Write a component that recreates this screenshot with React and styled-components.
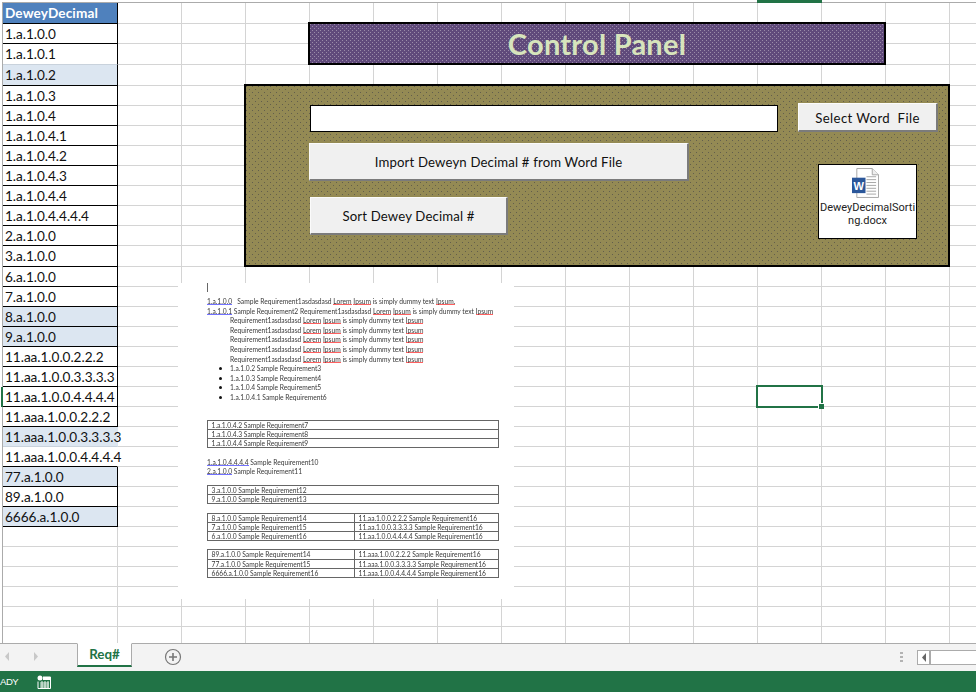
import React from "react";
import styled, { createGlobalStyle } from "styled-components";

const GlobalStyle = createGlobalStyle`
  html, body { margin: 0; padding: 0; background: #fff; }
  body { font-family: "Lato", "Liberation Sans", sans-serif; overflow: hidden; }
`;

const Page = styled.div`
  width: 976px; height: 692px; display: flex; flex-direction: column; overflow: hidden;
`;
const SheetArea = styled.div`
  position: relative; flex: 1; min-height: 0; overflow: hidden; padding: 2px 0 0 2px; background: #fff;
`;
const ColumnMark = styled.div`
  position: absolute; left: 757px; top: 0; width: 65px; height: 3px; background: #217346;
`;
const Grid = styled.div`
  display: grid; border-top: 1px solid #ababab; border-left: 1px solid #ababab;
  grid-template-columns: 115px repeat(14, 64px);
  grid-template-rows: ${p => p.$rows.map(h => `${h}px`).join(" ")};
`;
const EmptyCell = styled.div`
  box-sizing: border-box; border-right: 1px solid #d4d4d4; border-bottom: 1px solid #d4d4d4;
`;
const DataCell = styled.div`
  box-sizing: border-box; position: relative; z-index: 1; padding: 1px 0 0 2px; line-height: 18px;
  font-size: 13.6px; color: #111; white-space: nowrap; letter-spacing: -0.03px;
  background: ${p => (p.$fill ? "#dce6f1" : "#fff")};
  border-right: 1px solid ${p => (p.$open ? "transparent" : "#000")};
  border-bottom: 1px solid ${p => (p.$soft ? "#c9d2dc" : "#000")};
`;
const HeaderCell = styled(DataCell)`
  background: #4f81bd; color: #fff; font-weight: 700; border-right-color: #000; letter-spacing: 0.12px;
`;
const RowMark = styled.div`
  position: absolute; left: 1px; top: 387px; width: 2px; height: 20px; background: #217346; z-index: 2;
`;
const Title = styled.div`
  position: absolute; left: 308px; top: 22px; width: 578px; height: 43px; box-sizing: border-box;
  border: 2px solid #000; display: flex; align-items: center; justify-content: center;
  background-color: #604a7b;
  background-image:
    radial-gradient(circle at 0.5px 0.5px, #9a8ba8 0.7px, transparent 0.7px),
    radial-gradient(circle at 0.5px 0.5px, #9a8ba8 0.7px, transparent 0.7px);
  background-size: 4px 4px; background-position: 0 0, 2px 2px;
  color: #d7e4bc; font-size: 29px; font-weight: 700; letter-spacing: 0.25px;
`;
const Panel = styled.div`
  position: absolute; left: 244px; top: 84px; width: 706px; height: 183px; box-sizing: border-box;
  border: 2px solid #000; display: flex;
  background-color: #948a54;
  background-image:
    radial-gradient(circle at 0.5px 0.5px, #625e4c 0.7px, transparent 0.7px),
    radial-gradient(circle at 0.5px 0.5px, #625e4c 0.7px, transparent 0.7px);
  background-size: 6px 6px; background-position: 0 0, 3px 3px;
`;
const LeftColumn = styled.div`
  display: flex; flex-direction: column; align-items: flex-start; width: 468px; margin-left: 64px; padding-top: 19px;
`;
const RightColumn = styled.div`
  display: flex; flex-direction: column; align-items: flex-start; margin-left: 20px; padding-top: 17px;
`;
const PathField = styled.div`
  box-sizing: border-box; width: 468px; height: 27px; background: #fff; border: 1px solid #000;
`;
const ActionButton = styled.div`
  box-sizing: border-box; width: ${p => p.$w}px; height: ${p => p.$h}px;
  margin: ${p => p.$margin || 0}; padding-top: ${p => p.$drop || 0}px;
  display: flex; align-items: center; justify-content: center;
  background: #f0f0f0; color: #111; font-size: 13.2px; letter-spacing: ${p => p.$track || 0.15}px;
  border-top: 1px solid #fbfbfb; border-left: 1px solid #fbfbfb;
  border-right: 2px solid #7b7b7b; border-bottom: 2px solid #7b7b7b;
`;
const WordObject = styled.div`
  box-sizing: border-box; width: 99px; height: 75px; margin: 32px 0 0 20px; padding-top: 3px;
  background: #fff; border: 1px solid #000;
  display: flex; flex-direction: column; align-items: center;
`;
const WordGlyph = styled.svg`
  display: block; margin-right: 4px;
`;
const WordLabel = styled.div`
  width: 96px; margin-top: 3px; text-align: center; word-break: break-all; color: #222;
  font-family: "Roboto", sans-serif; font-size: 11px; line-height: 13px;
`;
const DocImage = styled.div`
  position: absolute; left: 178px; top: 283px; width: 336px; height: 316px; box-sizing: border-box;
  background: #fff; padding: 0 15px 0 29px; z-index: 3;
  font-size: 6.69px; line-height: 9.6px; color: #3a3a3a; white-space: nowrap;
`;
const DocBody = styled.div`
  filter: blur(0.35px);
`;
const Caret = styled.div`
  width: 1px; height: 9px; background: #666; margin-bottom: 5px;
`;
const DocLine = styled.div`
  margin-left: ${p => (p.$indent ? "23px" : 0)};
  margin-top: ${p => p.$gap || 0}px;
`;
const Tag = styled.span`
  background: linear-gradient(#7272ff, #7272ff) 0 100% / 100% 1px no-repeat;
`;
const Spell = styled.span`
  background: linear-gradient(#ff6060, #ff6060) 0 100% / 100% 1px no-repeat;
`;
const BulletList = styled.ul`
  margin: 0; padding: 0 0 0 23px; list-style: none;
`;
const BulletItem = styled.li`
  position: relative;
  &::before {
    content: ""; position: absolute; left: -11px; top: 3px; width: 3px; height: 3px; border-radius: 50%; background: #111;
  }
`;
const DocTable = styled.div`
  display: grid; grid-template-columns: ${p => (p.$split ? "146px 1fr" : "1fr")};
  width: 292px; box-sizing: border-box; margin-top: ${p => p.$gap}px;
  border: 1px solid #666; border-bottom-width: 0;
`;
const DocCell = styled.div`
  box-sizing: border-box; height: 9.1px; line-height: 8.2px; padding-left: 3.5px;
  border-bottom: 1px solid #666;
  &:nth-child(2n) { border-left: ${p => (p.$split ? "1px solid #666" : "0")}; }
`;
const Selection = styled.div`
  position: absolute; left: 756px; top: 385px; width: 67px; height: 23px; box-sizing: border-box;
  border: 2px solid #217346; z-index: 4;
  &::after {
    content: ""; position: absolute; right: -3px; bottom: -3px; width: 5px; height: 5px;
    background: #217346; border: 1px solid #fff; border-right: 0; border-bottom: 0;
  }
`;
const TabBar = styled.div`
  height: 28px; flex: none; box-sizing: border-box; background: #f3f3f3; border-top: 1px solid #ababab;
  display: flex; align-items: flex-start; position: relative;
`;
const NavArrows = styled.div`
  width: 77px; box-sizing: border-box; padding: 8px 0 0 4px; display: flex; gap: 23px; flex: none;
`;
const SheetTab = styled.div`
  box-sizing: border-box; width: 55px; height: 24px; margin-top: -1px; flex: none; background: #fff;
  border-left: 1px solid #ababab; border-right: 1px solid #ababab; border-top: 1px solid #fff; border-bottom: 2px solid #217346;
  color: #217346; font-weight: 700; font-size: 13.4px; text-align: center; line-height: 21px;
`;
const AddSheet = styled.div`
  margin: 4px 0 0 32px; width: 18px; height: 18px; flex: none;
`;
const BarGrip = styled.div`
  margin: 8px 0 0 auto; width: 3px; display: flex; flex-direction: column; gap: 2px;
`;
const GripDot = styled.div`
  width: 3px; height: 2px; background: #b3b3b3;
`;
const ScrollBox = styled.div`
  margin: 6px 0 0 14px; box-sizing: border-box; width: 59px; height: 15px; flex: none; display: flex;
  border: 1px solid #ababab; border-right: 0; background: #fff;
`;
const ScrollButton = styled.div`
  width: 13px; box-sizing: border-box; border-right: 2px solid #ababab; display: flex; align-items: center; justify-content: center;
`;
const StatusBar = styled.div`
  height: 21px; flex: none; background: #217346; color: #fff; display: flex; align-items: center;
  font-family: "Liberation Sans", sans-serif; font-size: 9.6px; letter-spacing: -0.5px; gap: 19px;
`;
const StatusIcon = styled.svg`
  display: block; margin-top: 1px;
`;

const ROW_LINES = [23,43,64,85,105,125,145,165,185,205,225,245,266,286,306,326,346,366,386,406,426,446,466,486,506,526,546,566,586,606,626,646];
const rowHeights = ROW_LINES.map((y, i) => y - (i === 0 ? 2 : ROW_LINES[i - 1]));

const DATA = [
  { t: "1.a.1.0.0" }, { t: "1.a.1.0.1", soft: true }, { t: "1.a.1.0.2", fill: true }, { t: "1.a.1.0.3" },
  { t: "1.a.1.0.4" }, { t: "1.a.1.0.4.1" }, { t: "1.a.1.0.4.2" }, { t: "1.a.1.0.4.3" }, { t: "1.a.1.0.4.4" },
  { t: "1.a.1.0.4.4.4.4" }, { t: "2.a.1.0.0" }, { t: "3.a.1.0.0" }, { t: "6.a.1.0.0" }, { t: "7.a.1.0.0" },
  { t: "8.a.1.0.0", fill: true }, { t: "9.a.1.0.0", fill: true }, { t: "11.aa.1.0.0.2.2.2" },
  { t: "11.aa.1.0.0.3.3.3.3" }, { t: "11.aa.1.0.0.4.4.4.4" }, { t: "11.aaa.1.0.0.2.2.2" },
  { t: "11.aaa.1.0.0.3.3.3.3", fill: true, open: true, soft: true }, { t: "11.aaa.1.0.0.4.4.4.4", open: true },
  { t: "77.a.1.0.0", fill: true }, { t: "89.a.1.0.0" }, { t: "6666.a.1.0.0", fill: true },
];

const Lorem = () => (
  <>
    <Spell>Lorem</Spell> <Spell>Ipsum</Spell> is simply dummy text <Spell>Ipsum</Spell>
  </>
);

const WordIcon = () => (
  <WordGlyph width="27" height="30" viewBox="0 0 28 31">
    <path d="M5 .5h16l6.5 6.5v23.5H5z" fill="#fff" stroke="#a6a6a6" />
    <path d="M21 .5V7h6.5" fill="#eee" stroke="#a6a6a6" />
    <path d="M15 9h10M15 12h10M15 15h10M15 18h10M15 21h10M15 24h10M15 27h10" stroke="#a6a6a6" />
    <rect x="0" y="10" width="14" height="16" fill="#2b579a" />
    <text x="7" y="22.5" textAnchor="middle" fontFamily="Liberation Sans" fontWeight="700" fontSize="11.5" fill="#fff">W</text>
  </WordGlyph>
);

const Arrow = ({ flip, color = "#c8c8c8" }) => (
  <svg width="6" height="9" viewBox="0 0 6 9">
    <path d={flip ? "M1 0l4 4.5L1 9z" : "M5 0L1 4.5 5 9z"} fill={color} />
  </svg>
);

const TWO_A = [
  ["8.a.1.0.0 Sample Requirement14", "11.aa.1.0.0.2.2.2 Sample Requirement16"],
  ["7.a.1.0.0 Sample Requirement15", "11.aa.1.0.0.3.3.3.3 Sample Requirement16"],
  ["6.a.1.0.0 Sample Requirement16", "11.aa.1.0.0.4.4.4.4 Sample Requirement16"],
];
const TWO_B = [
  ["89.a.1.0.0 Sample Requirement14", "11.aaa.1.0.0.2.2.2 Sample Requirement16"],
  ["77.a.1.0.0 Sample Requirement15", "11.aaa.1.0.0.3.3.3.3 Sample Requirement16"],
  ["6666.a.1.0.0 Sample Requirement16", "11.aaa.1.0.0.4.4.4.4 Sample Requirement16"],
];

export default function App() {
  return (
    <Page>
      <GlobalStyle />
      <SheetArea>
        <ColumnMark />
        <RowMark />
        <Grid $rows={rowHeights}>
          {rowHeights.map((_, r) => {
            const cells = [];
            if (r === 0) cells.push(<HeaderCell key="a">DeweyDecimal</HeaderCell>);
            else if (DATA[r - 1]) {
              const d = DATA[r - 1];
              cells.push(<DataCell key="a" $fill={d.fill} $open={d.open} $soft={d.soft}>{d.t}</DataCell>);
            } else cells.push(<EmptyCell key="a" />);
            for (let c = 0; c < 14; c++) cells.push(<EmptyCell key={c} />);
            return <React.Fragment key={r}>{cells}</React.Fragment>;
          })}
        </Grid>

        <Title>Control Panel</Title>

        <Panel>
          <LeftColumn>
            <PathField />
            <ActionButton $w={380} $h={38} $margin="11px 0 0 -1px">Import Deweyn Decimal # from Word File</ActionButton>
            <ActionButton $w={198} $h={38} $margin="16px 0 0 0">Sort Dewey Decimal #</ActionButton>
          </LeftColumn>
          <RightColumn>
            <ActionButton $w={140} $h={29} $track={0.38} $drop={1}>Select Word&nbsp; File</ActionButton>
            <WordObject>
              <WordIcon />
              <WordLabel>DeweyDecimalSorting.docx</WordLabel>
            </WordObject>
          </RightColumn>
        </Panel>

        <DocImage>
          <DocBody>
            <Caret />
            <DocLine><Tag>1.a.1.0.0</Tag>&nbsp;&nbsp; Sample Requirement1asdasdasd <Spell>Lorem</Spell> <Spell>Ipsum</Spell> is simply dummy text <Spell>Ipsum.</Spell></DocLine>
            <DocLine><Tag>1.a.1.0.1</Tag> Sample Requirement2 Requirement1asdasdasd <Lorem /></DocLine>
            {[0, 1, 2, 3, 4].map(i => (
              <DocLine $indent key={i}>Requirement1asdasdasd <Lorem /></DocLine>
            ))}
            <BulletList>
              <BulletItem>1.a.1.0.2 Sample Requirement3</BulletItem>
              <BulletItem>1.a.1.0.3 Sample Requirement4</BulletItem>
              <BulletItem>1.a.1.0.4 Sample Requirement5</BulletItem>
              <BulletItem>1.a.1.0.4.1 Sample Requirement6</BulletItem>
            </BulletList>
            <DocTable $gap={17}>
              <DocCell>1.a.1.0.4.2 Sample Requirement7</DocCell>
              <DocCell>1.a.1.0.4.3 Sample Requirement8</DocCell>
              <DocCell>1.a.1.0.4.4 Sample Requirement9</DocCell>
            </DocTable>
            <DocLine $gap={10}><Tag>1.a.1.0.4.4.4.4</Tag> Sample Requirement10</DocLine>
            <DocLine><Tag>2.a.1.0.0</Tag> Sample Requirement11</DocLine>
            <DocTable $gap={8}>
              <DocCell>3.a.1.0.0 Sample Requirement12</DocCell>
              <DocCell>9.a.1.0.0 Sample Requirement13</DocCell>
            </DocTable>
            <DocTable $split $gap={9}>
              {TWO_A.flat().map(t => <DocCell $split key={t}>{t}</DocCell>)}
            </DocTable>
            <DocTable $split $gap={8}>
              {TWO_B.flat().map(t => <DocCell $split key={t}>{t}</DocCell>)}
            </DocTable>
          </DocBody>
        </DocImage>

        <Selection />
      </SheetArea>

      <TabBar>
        <NavArrows>
          <Arrow />
          <Arrow flip />
        </NavArrows>
        <SheetTab>Req#</SheetTab>
        <AddSheet>
          <svg width="18" height="18" viewBox="0 0 18 18">
            <circle cx="9" cy="9" r="7.5" fill="none" stroke="#777" strokeWidth="1.2" />
            <path d="M9 5v8M5 9h8" stroke="#777" strokeWidth="1.6" />
          </svg>
        </AddSheet>
        <BarGrip>
          <GripDot /><GripDot /><GripDot />
        </BarGrip>
        <ScrollBox>
          <ScrollButton><Arrow color="#666" /></ScrollButton>
        </ScrollBox>
      </TabBar>
      <StatusBar>
        <span>ADY</span>
        <StatusIcon width="14" height="14" viewBox="0 0 14 14">
          <circle cx="3" cy="3" r="2.5" fill="#fff" />
          <path d="M6 2h7.5v11.5H1V6.5" fill="none" stroke="#fff" />
          <path d="M3 8h9M3 10h9M3 12h9M5 6v7M8 6v7M11 6v7" stroke="#fff" strokeWidth="0.9" />
          <rect x="6" y="2" width="7.5" height="3" fill="#fff" />
        </StatusIcon>
      </StatusBar>
    </Page>
  );
}
